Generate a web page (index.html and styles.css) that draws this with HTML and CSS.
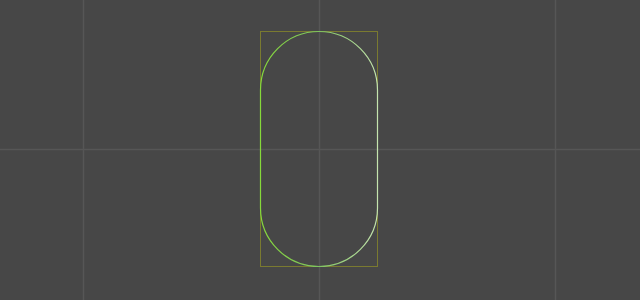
FILE: index.html
```html
<!DOCTYPE html>
<html>
    <head>
        <title>Capsule</title>
        <link rel="stylesheet" href="styles.css">
    </head>
    <body>
    <div class="viewport">
        <svg class="canvas" width="640" height="300" viewBox="0 0 640 300">
            <defs>
                <linearGradient id="edge" x1="0" y1="0" x2="1" y2="0">
                    <stop offset="0" stop-color="#86d93a"/>
                    <stop offset="0.5" stop-color="#80c460"/>
                    <stop offset="1" stop-color="#c4e4ae"/>
                </linearGradient>
            </defs>
            <g class="grid">
                <line x1="83.5" y1="0" x2="83.5" y2="300"/>
                <line x1="319.5" y1="0" x2="319.5" y2="300"/>
                <line x1="555.5" y1="0" x2="555.5" y2="300"/>
                <line x1="0" y1="149.5" x2="640" y2="149.5"/>
            </g>
            <rect class="bounds" x="260.5" y="31.5" width="117" height="235"/>
            <rect class="capsule" x="260.5" y="31.5" width="117" height="235" rx="58.5" ry="58.5"/>
        </svg>
    </div>
    </body>
</html>
```

FILE: styles.css
```css
body {
    margin: 0;
    background-color: #474747;
}

.viewport {
    width: 640px;
    height: 300px;
    overflow: hidden;
}

.canvas {
    display: block;
}

.grid line {
    stroke: #565656;
    stroke-width: 1.5;
}

.bounds {
    fill: none;
    stroke: #7a7a30;
    stroke-width: 1;
}

.capsule {
    fill: none;
    stroke: url(#edge);
    stroke-width: 1.2;
}
```
